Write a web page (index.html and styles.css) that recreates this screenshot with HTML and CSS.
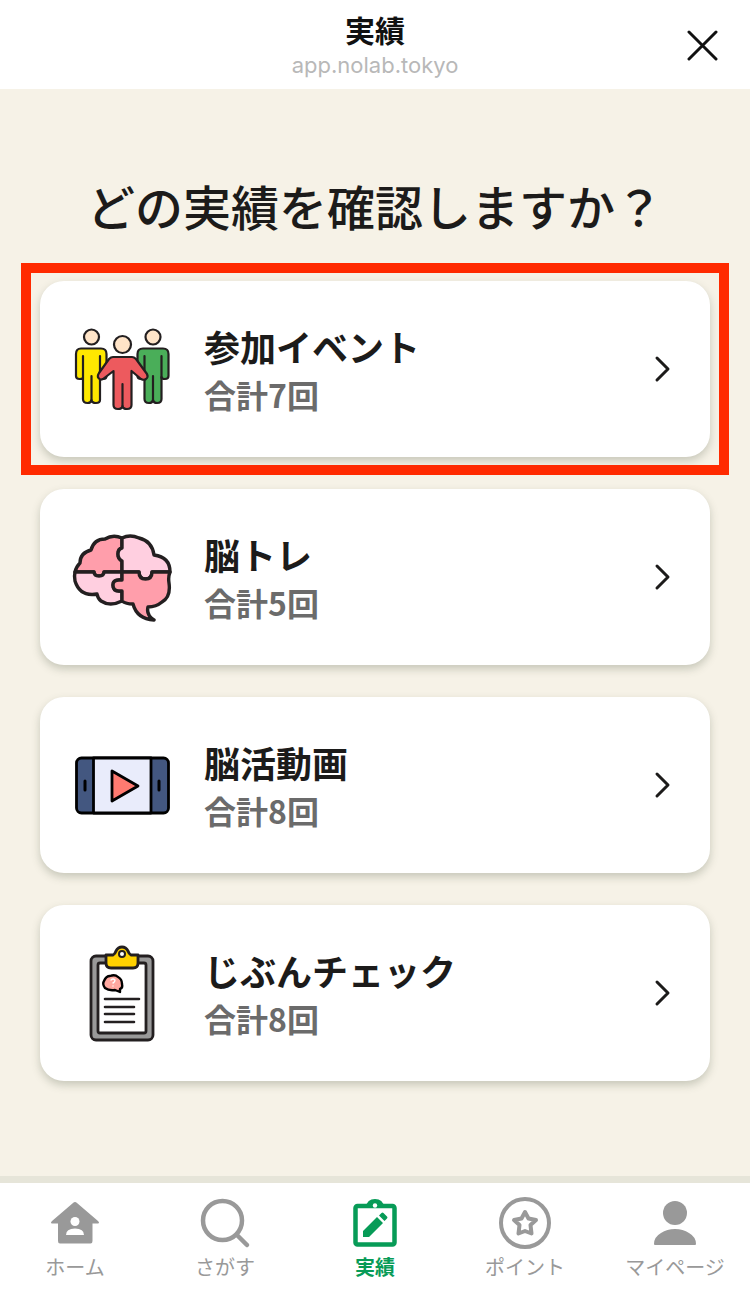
FILE: index.html
```html
<!DOCTYPE html>
<html lang="ja">
<head>
  <meta charset="UTF-8" />
  <meta name="viewport" content="width=device-width, initial-scale=1.0"/>
  <title>実績</title>
  <link rel="stylesheet" href="styles.css">
</head>
<body>

  <!-- Header -->
  <header class="header">
    <div class="header-text">
      <h1>実績</h1>
      <p>app.nolab.tokyo</p>
    </div>
    <button class="close" type="button" aria-label="閉じる">
      <svg width="32" height="32" viewBox="0 0 32 32" fill="none" stroke="#111" stroke-width="3" stroke-linecap="round">
        <path d="M3 3L30 30M30 3L3 30"/>
      </svg>
    </button>
  </header>

  <main class="main">
    <h2>どの実績を確認しますか？</h2>

    <!-- Record list -->
    <div class="list">
      <a href="#events" class="card selected">
        <svg class="icon" viewBox="0 0 100 100" stroke="#231f20" stroke-width="2.2" stroke-linejoin="round" stroke-linecap="round">
          <g fill="#ffe4c8">
            <circle cx="19.500" cy="18" r="7.500"/>
            <circle cx="81" cy="18" r="7.500"/>
          </g>
          <path fill="#ffe800" d="M9 29.500H29Q34.500 29.500 34.500 35V57Q34.500 60 31.500 60Q28 60 28 57V81Q28 84 24 84Q20 84 19.500 81Q19 84 15.500 84Q11 84 11 80V59Q10 60 7.500 60Q4 60 4 57V35Q4 29.500 9 29.500Z"/>
          <path fill="none" d="M11 37V59M28 37V57M19.500 57V81"/>
          <path fill="#4aae59" d="M71 29.500H91Q96.500 29.500 96.500 35V57Q96.500 60 93 60Q90 60 89.500 58V80Q89.500 84 85 84Q81.500 84 81 81Q80.500 84 77 84Q72.500 84 72.500 80V57Q72 60 69 60Q65.500 60 65.500 57V35Q65.500 29.500 71 29.500Z"/>
          <path fill="none" d="M72.500 37V57M89.500 37V59M81 57V81"/>
          <circle cx="50.500" cy="25.500" r="8.500" fill="#ffe4c8"/>
          <path fill="#ed5a5e" d="M41 38H60Q62 38 64 40L75 55Q76.500 58 74 60Q72 61.500 69 60L59.500 52V86Q59.500 90 55 90Q51 90 50.500 87Q50 90 46 90Q41.500 90 41.500 86V52L31 60Q28 61.500 26.500 59Q25 57 27 54L37 40Q39 38 41 38Z"/>
          <path fill="none" d="M50.500 65V87"/>
        </svg>
        <div class="info">
          <h3>参加イベント</h3>
          <p>合計7回</p>
        </div>
        <svg class="arrow" viewBox="0 0 18 28"><path d="M3 3L14 14L3 25"/></svg>
      </a>

      <a href="#training" class="card">
        <svg class="icon" viewBox="0 0 100 100" stroke="#231f20" stroke-width="3.4" stroke-linejoin="round" stroke-linecap="round">
          <path fill="#ff9eab" d="M50 11Q41 7 33 12Q22 12 19 23Q8 26 8 36Q4 40 3 45H22Q22 49 27 49Q32 49 32 45H50V34Q46 32 46 27Q46 22 50 21Z"/>
          <path fill="#ffcfe0" d="M50 11Q58 7 67 11Q80 14 82 28Q98 30 98 45H80Q80 52 73.500 52Q67 52 67 45H50V34Q46 32 46 27Q46 22 50 21Z"/>
          <path fill="#ffcfe0" d="M3 45H22Q22 49 27 49Q32 49 32 45H50V53H47Q41 53 41 58Q41 64 47 64H50V74Q38 80 29 74Q26 72 25 67Q8 70 3 54Q2 49 3 45Z"/>
          <path fill="#ff9eab" d="M50 45H67Q67 52 73.500 52Q80 52 80 45H98Q96 50 97 56Q99 70 90 75Q84 80 76 80Q74 88 82 93Q65 92 61 77Q54 77 50 74V64H47Q41 64 41 58Q41 53 47 53H50Z"/>
        </svg>
        <div class="info">
          <h3>脳トレ</h3>
          <p>合計5回</p>
        </div>
        <svg class="arrow" viewBox="0 0 18 28"><path d="M3 3L14 14L3 25"/></svg>
      </a>

      <a href="#movies" class="card">
        <svg class="icon" viewBox="0 0 100 100" stroke="#000" stroke-width="2.8" stroke-linejoin="round" stroke-linecap="round">
          <rect x="4.500" y="23" width="92" height="55" rx="5" fill="#435780"/>
          <path fill="#e9ecfb" d="M21.500 23H79V78H21.500Z"/>
          <path fill="#ff7a70" d="M40 36V66L66 51Z"/>
          <path d="M13 46V55M87 46V55" stroke-width="3"/>
        </svg>
        <div class="info">
          <h3>脳活動画</h3>
          <p>合計8回</p>
        </div>
        <svg class="arrow" viewBox="0 0 18 28"><path d="M3 3L14 14L3 25"/></svg>
      </a>

      <a href="#check" class="card">
        <svg class="icon" viewBox="0 0 100 100" stroke="#231f20" stroke-width="2.800" stroke-linejoin="round" stroke-linecap="round">
          <rect x="19" y="13" width="62" height="84" rx="5" fill="#999"/>
          <rect x="26" y="20" width="48" height="70" rx="2" fill="#fff"/>
          <path fill="#ffd100" d="M34 12H41Q43 11 44 8Q46 4 50 4Q54 4 56 8Q57 11 59 12H66V20Q66 25 61 25H39Q34 25 34 20Z"/>
          <circle cx="50" cy="11" r="3" fill="#fff" stroke-width="2"/>
          <path fill="#ffa8a0" stroke="#000" stroke-width="2.400" d="M33 45Q30 41 32 38Q34 33 38 33Q43 31 46 34Q50 36 50 41Q51 45 48 46V49L43 47Q37 48 33 45Z"/>
          <path fill="none" stroke="#fff" stroke-width="1.400" d="M39 37Q41 35 43 37Q43 39 41 40M41 43V43"/>
          <path fill="none" stroke-width="2.600" d="M33 56H67M33 64H62M33 71H62M33 79H62"/>
        </svg>
        <div class="info">
          <h3>じぶんチェック</h3>
          <p>合計8回</p>
        </div>
        <svg class="arrow" viewBox="0 0 18 28"><path d="M3 3L14 14L3 25"/></svg>
      </a>
    </div>
  </main>

  <!-- Bottom menu -->
  <nav class="menu">
    <a href="#home">
      <svg viewBox="0 0 56 56" fill="currentColor">
        <path d="M28 7Q29 7 30 8L51 26Q53 28 51 28.500H45.500V46Q45.500 48.500 43.500 48.500H13Q11 48.500 11 46V28.500H5Q3 28 5 26L26 8Q27 7 28 7Z"/>
        <circle cx="28" cy="26.500" r="4.500" fill="#fff"/>
        <path fill="#fff" d="M19 40Q19 33.500 28 33.500Q37 33.500 37 40Z"/>
      </svg>
      ホーム
    </a>
    <a href="#search">
      <svg viewBox="0 0 56 56" fill="none" stroke="currentColor" stroke-width="4.500" stroke-linecap="round">
        <circle cx="25.500" cy="25.500" r="19.500"/>
        <path d="M40 40L50 50"/>
      </svg>
      さがす
    </a>
    <a href="#record" class="active">
      <svg viewBox="0 0 56 56" fill="none" stroke="currentColor" stroke-width="4.500" stroke-linejoin="round">
        <rect x="8.500" y="11" width="39" height="38.500" rx="2"/>
        <path fill="currentColor" stroke="none" d="M19 12Q20 4 28 4Q36 4 37 12Z"/>
        <circle cx="28" cy="10.500" r="2.200" fill="#fff" stroke="none"/>
        <path fill="currentColor" stroke="none" d="M16 36V42H22L36 28L30 22ZM32 20.500L37.500 26L40 23.500Q41 22.500 40 21.500L36.500 18Q35.500 17 34.500 18Z"/>
      </svg>
      実績
    </a>
    <a href="#point">
      <svg viewBox="0 0 56 56" fill="none" stroke="currentColor" stroke-width="4" stroke-linejoin="round">
        <circle cx="28" cy="28" r="24"/>
        <path d="M28 17L31.500 23.500L39 25L33.500 30L34.500 38.500L28 36L21.500 38.500L22.500 30L17 25L24.500 23.500Z"/>
      </svg>
      ポイント
    </a>
    <a href="#mypage">
      <svg viewBox="0 0 56 56" fill="currentColor">
        <circle cx="28" cy="18" r="12"/>
        <path d="M7 49Q7 42 14 38Q20 34 28 34Q36 34 42 38Q49 42 49 49Q49 50 48 50H8Q7 50 7 49Z"/>
      </svg>
      マイページ
    </a>
  </nav>

</body>
</html>
```
FILE: styles.css
```css
* {
  box-sizing: border-box;
}
body {
  margin: 0;
  min-height: 100vh;
  display: flex;
  flex-direction: column;
  font-family: "Noto Sans CJK JP", sans-serif;
  background: #f6f2e7;
  color: #1c1b1a;
}
h1, h2, h3, p {
  margin: 0;
}
a {
  color: inherit;
  text-decoration: none;
}
svg {
  display: block;
  flex: none;
}

/* header */
.header {
  display: grid;
  grid-template-columns: 1fr auto 1fr;
  align-items: center;
  height: 89px;
  padding: 0 32px;
  background: #fff;
}
.header-text {
  grid-column: 2;
  text-align: center;
}
.header h1 {
  font-size: 30px;
  line-height: 40px;
  color: #111;
}
.header p {
  font-family: Inter, sans-serif;
  font-size: 22px;
  line-height: 32px;
  color: #b8b8b8;
}
.close {
  justify-self: end;
  padding: 0;
  border: none;
  background: none;
  cursor: pointer;
}

/* records */
.main {
  flex: 1;
  padding: 80px 40px;
}
.main h2 {
  font-size: 48px;
  font-weight: 500;
  line-height: 72px;
  text-align: center;
}
.list {
  display: flex;
  flex-direction: column;
  gap: 32px;
  margin-top: 40px;
}
.card {
  position: relative;
  display: flex;
  align-items: center;
  gap: 32px;
  height: 176px;
  padding: 0 38px 0 32px;
  background: #fff;
  border-radius: 24px;
  box-shadow: 0 4px 8px rgba(80, 90, 70, 0.28);
}
.selected::after {
  content: "";
  position: absolute;
  inset: -18px -19px;
  border: 10px solid #ff2a00;
}
.icon {
  width: 100px;
  height: 100px;
}
.info {
  flex: 1;
  padding-top: 2px;
}
.info h3 {
  font-size: 36px;
  line-height: 48px;
}
.info p {
  font-size: 32px;
  font-weight: 700;
  line-height: 48px;
  color: #6b6b6b;
}
.arrow {
  width: 18px;
  height: 28px;
  fill: none;
  stroke: #1c1b1a;
  stroke-width: 3;
  stroke-linecap: round;
  stroke-linejoin: round;
}

/* bottom menu */
.menu {
  display: grid;
  grid-template-columns: repeat(5, 1fr);
  height: 112px;
  padding-top: 12px;
  background: #fff;
  box-shadow: 0 -7px 0 #e6e5d9;
}
.menu a {
  display: flex;
  flex-direction: column;
  align-items: center;
  font-size: 20px;
  line-height: 32px;
  white-space: nowrap;
  color: #999;
}
.menu svg {
  width: 56px;
  height: 56px;
}
.menu .active {
  font-weight: 700;
  color: #079b57;
}
```
